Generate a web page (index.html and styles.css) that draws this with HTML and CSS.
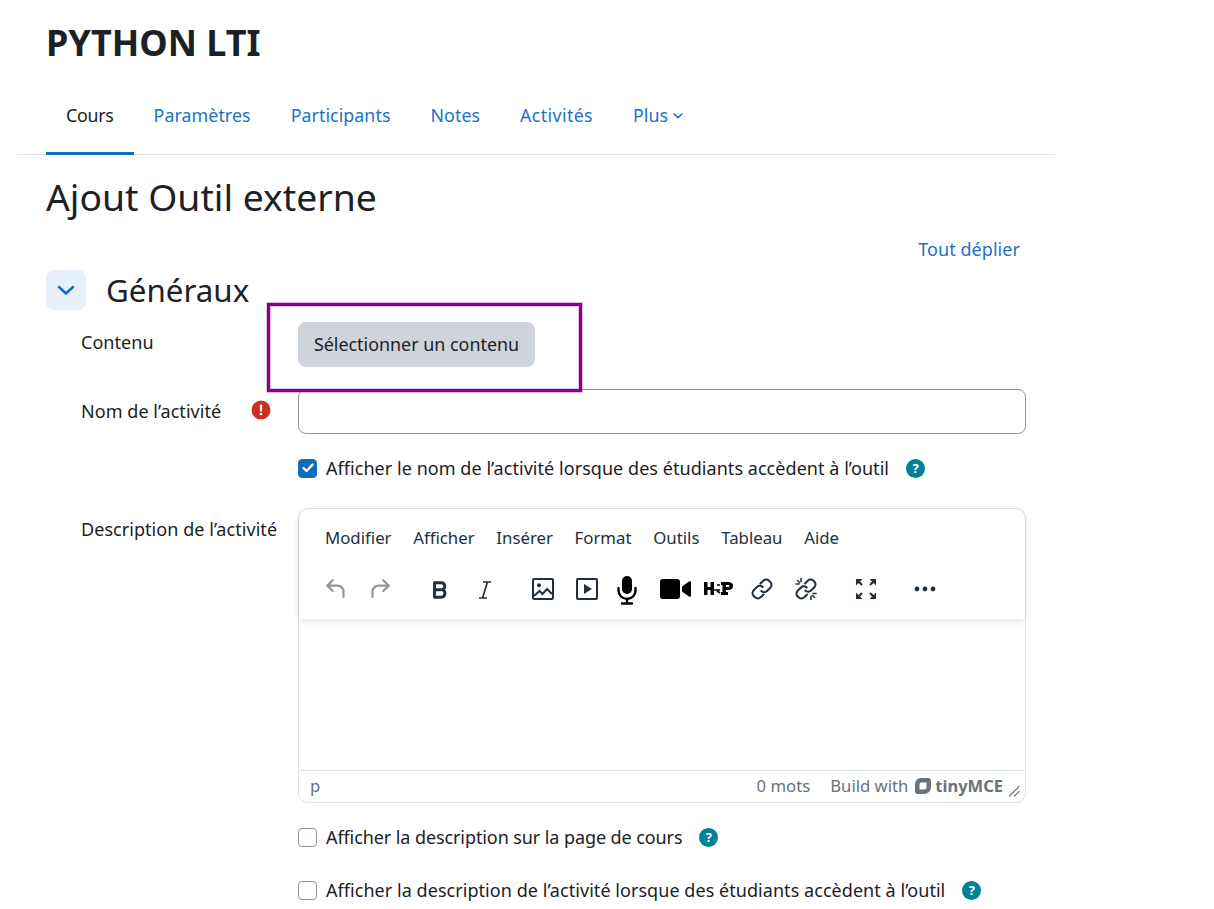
FILE: index.html
```html
<!DOCTYPE html>
<html lang="fr">
<head>
<meta charset="utf-8">
<title>Ajout Outil externe</title>
<link rel="stylesheet" href="styles.css">
</head>
<body>
<div class="page">
  <h1 class="course-title">PYTHON LTI</h1>
  <nav class="tabs">
    <a class="tab active">Cours</a>
    <a class="tab">Paramètres</a>
    <a class="tab">Participants</a>
    <a class="tab">Notes</a>
    <a class="tab tab-wide">Activités</a>
    <a class="tab">Plus <svg class="caret" width="10" height="6" viewBox="0 0 10 6"><path d="M1 1l4 3.6L9 1" fill="none" stroke="currentColor" stroke-width="1.5" stroke-linecap="round" stroke-linejoin="round"/></svg></a>
  </nav>
  <h2 class="page-title">Ajout Outil externe</h2>
  <div class="expand-row"><a class="expand">Tout déplier</a></div>
  <div class="section-head">
    <span class="toggle"><svg width="18" height="11" viewBox="0 0 18 11"><path d="M2 2l7 6.5L16 2" fill="none" stroke="#0f6cbf" stroke-width="2.4" stroke-linecap="round" stroke-linejoin="round"/></svg></span>
    <h3 class="section-title">Généraux</h3>
  </div>
  <div class="form">
    <div class="row row-content">
      <div class="label">Contenu</div>
      <div class="field"><button class="btn">Sélectionner un contenu</button><span class="highlight"></span></div>
    </div>
    <div class="row row-name">
      <div class="label label-req">Nom de l’activité
        <span class="req"><svg width="20" height="20" viewBox="0 0 20 20"><circle cx="10" cy="10" r="9.5" fill="#ca3120"/><rect x="8.9" y="4.6" width="2.2" height="6.8" rx="1" fill="#fff"/><circle cx="10" cy="14" r="1.3" fill="#fff"/></svg></span>
      </div>
      <div class="field"><input class="input" type="text"></div>
    </div>
    <div class="row row-check1">
      <div class="label"></div>
      <div class="field check">
        <span class="box on"><svg width="12" height="10" viewBox="0 0 12 10"><path d="M1.5 5l3 3 6-6.4" fill="none" stroke="#fff" stroke-width="2.4" stroke-linecap="round" stroke-linejoin="round"/></svg></span>
        <span>Afficher le nom de l’activité lorsque des étudiants accèdent à l’outil</span>
        <span class="help">?</span>
      </div>
    </div>
    <div class="row row-desc">
      <div class="label">Description de l’activité</div>
      <div class="field">
        <div class="editor">
          <div class="ed-head">
            <div class="menubar"><span>Modifier</span><span>Afficher</span><span>Insérer</span><span>Format</span><span>Outils</span><span>Tableau</span><span>Aide</span></div>
            <div class="toolbar">
              <svg class="ic i-undo" width="24" height="24" viewBox="0 0 24 24"><path d="M6.4 8.6h8.1a6 6 0 0 1 6 6V20" fill="none" stroke="#8f979e" stroke-width="2.2" stroke-linecap="round"/><path d="M9.8 3.2L4.2 8.6l5.600 5.400" fill="none" stroke="#8f979e" stroke-width="2.2" stroke-linecap="round" stroke-linejoin="round"/></svg>
              <svg class="ic i-redo" width="24" height="24" viewBox="0 0 24 24"><path d="M17.6 8.6H9.5a6 6 0 0 0-6 6V20" fill="none" stroke="#8f979e" stroke-width="2.2" stroke-linecap="round"/><path d="M14.2 3.2l5.600 5.400-5.600 5.400" fill="none" stroke="#8f979e" stroke-width="2.2" stroke-linecap="round" stroke-linejoin="round"/></svg>
              <svg class="ic i-bold" width="24" height="24" viewBox="0 0 24 24"><path d="M6.500 4.800h6.500a3.500 3.500 0 0 1 1 6.900 3.800 3.800 0 0 1-1 7.500H6.500zM6.500 11.800h6.500" fill="none" stroke="#222f3e" stroke-width="2.900" stroke-linejoin="round"/></svg>
              <svg class="ic i-italic" width="24" height="24" viewBox="0 0 24 24"><path d="M10 4h8M6 20h8M14.400 4l-4.800 16" fill="none" stroke="#222f3e" stroke-width="1.700"/></svg>
              <svg class="ic i-img" width="24" height="24" viewBox="0 0 24 24"><rect x="2" y="2" width="20" height="20" fill="none" stroke="#222f3e" stroke-width="2" rx="1"/><circle cx="8" cy="8.200" r="2" fill="#222f3e"/><path d="M3 19l5.500-5 3 3 4.500-5 5 5" fill="none" stroke="#222f3e" stroke-width="2"/></svg>
              <svg class="ic i-media" width="24" height="24" viewBox="0 0 24 24"><rect x="2" y="2" width="20" height="20" fill="none" stroke="#222f3e" stroke-width="2" rx="1"/><path d="M9 7l8 5-8 5z" fill="#222f3e"/></svg>
              <svg class="ic i-mic" width="24" height="30" viewBox="0 0 24 30"><rect x="7" y="1" width="10" height="18" rx="5" fill="#000"/><path d="M3.500 13v2.500a8.500 8.500 0 0 0 17 0V13" fill="none" stroke="#000" stroke-width="2.400" stroke-linecap="round"/><path d="M12 24v4M7 28.500h10" stroke="#000" stroke-width="2.400" stroke-linecap="round"/></svg>
              <svg class="ic i-video" width="32" height="20" viewBox="0 0 32 20"><rect x="0" y="0" width="20" height="20" rx="3" fill="#000"/><path d="M22 7.500l7-5q2-1 2 1v13q0 2-2 1l-7-5z" fill="#000"/></svg>
              <svg class="ic i-h5p" width="32" height="18" viewBox="0 0 32 18"><path d="M2 2v13h3.500v-5h3v5H12V2H8.500v5h-3V2zM19 2v3h1.500v7H19v3h7v-3h-2v-2h2q5 0 5-4t-5-4zm5 3h2q1.500 0 1.500 1T26 7h-2z" fill="#000"/><path d="M12 10h6m0-5h-3m3 8l-3-2" stroke="#000" stroke-width="1.600" fill="none"/></svg>
              <svg class="ic i-link" width="24" height="24" viewBox="0 0 24 24"><g fill="none" stroke="#222f3e" stroke-width="2" stroke-linecap="round"><path d="M10.500 6.500l2.800-2.800a4 4 0 0 1 5.700 0l1.300 1.300a4 4 0 0 1 0 5.700l-3.300 3.300a4 4 0 0 1-5.700 0"/><path d="M13.500 17.500l-2.800 2.800a4 4 0 0 1-5.700 0l-1.300-1.300a4 4 0 0 1 0-5.700l3.300-3.300a4 4 0 0 1 5.700 0"/></g></svg>
              <svg class="ic i-unlink" width="26" height="26" viewBox="0 0 26 26"><g fill="none" stroke="#222f3e" stroke-width="2" stroke-linecap="round"><path d="M12 7.500l2.800-2.800a4 4 0 0 1 5.700 0l.8.8a4 4 0 0 1 0 5.700l-3.300 3.300a4 4 0 0 1-5.700 0"/><path d="M14 18.500l-2.800 2.800a4 4 0 0 1-5.700 0l-.8-.8a4 4 0 0 1 0-5.700l3.300-3.300a4 4 0 0 1 5.700 0"/><path d="M3 8h3M8 2.500v3M18 20.500v3M20 17.500h3M4.500 4.500l2 2M19.500 19.500l2 2" stroke-width="1.600"/></g></svg>
              <svg class="ic i-full" width="22" height="22" viewBox="0 0 22 22"><g fill="none" stroke="#222f3e" stroke-width="2.200"><path d="M7 7L3 3"/><path d="M15 7l4-4"/><path d="M7 15l-4 4"/><path d="M15 15l4 4"/></g><g fill="#222f3e"><path d="M1 1h6.500L1 7.500zM21 1v6.500L14.500 1zM1 21v-6.500L7.500 21zM21 21h-6.500L21 14.500z"/></g></svg>
              <svg class="ic i-more" width="22" height="6" viewBox="0 0 22 6"><g fill="#222f3e"><circle cx="3" cy="3" r="2.400"/><circle cx="11" cy="3" r="2.400"/><circle cx="19" cy="3" r="2.400"/></g></svg>
            </div>
          </div>
          <div class="ed-body"></div>
          <div class="statusbar">
            <span class="path">p</span>
            <span class="words">0 mots</span>
            <span class="brand"><span>Build with</span><svg width="18" height="18" viewBox="0 0 18 18"><path fill-rule="evenodd" d="M6 1h8a3 3 0 0 1 3 3v6a7 7 0 0 1-7 7H4a3 3 0 0 1-3-3V8a7 7 0 0 1 5-7zM7 5.500a2 2 0 0 0-1.500 2v5h5a2 2 0 0 0 2-2v-5z" fill="#68727c"/></svg><b>tinyMCE</b></span>
            <svg class="grip" width="12" height="12" viewBox="0 0 12 12"><path d="M1.500 11L11 1.500M6.500 11L11 6.500" stroke="#68727c" stroke-width="1.200" stroke-linecap="round"/></svg>
          </div>
        </div>
      </div>
    </div>
    <div class="row row-check2">
      <div class="label"></div>
      <div class="field check">
        <span class="box"></span>
        <span class="tight">Afficher la description sur la page de cours</span>
        <span class="help">?</span>
      </div>
    </div>
    <div class="row row-check3">
      <div class="label"></div>
      <div class="field check">
        <span class="box"></span>
        <span>Afficher la description de l’activité lorsque des étudiants accèdent à l’outil</span>
        <span class="help">?</span>
      </div>
    </div>
  </div>
</div>
</body>
</html>
```
FILE: styles.css
```css
* { box-sizing: border-box; }
html, body { margin: 0; padding: 0; background: #fff; }
body {
  font-family: "Noto Sans", "Open Sans", sans-serif;
  font-size: 18px;
  letter-spacing: .05px;
  line-height: 24px;
  color: #1d2125;
  height: 909px;
  overflow: hidden;
}
.page { width: 1055px; padding-left: 46px; padding-top: 21px; position: relative; }
.course-title { margin: 0; font-size: 36px; line-height: 44px; font-weight: 700; color: #1d2125; letter-spacing: 0; }
.tabs {
  display: flex;
  margin: 28px 0 0 -29px;
  padding-left: 29px;
  height: 62px;
  border-bottom: 1px solid #dee2e6;
}
.tab {
  padding: 0 20px 15px;
  height: 62px;
  display: flex;
  align-items: center;
  gap: 5px;
  color: #1a73c9;
  font-size: 17.800px;
  letter-spacing: .07px;
  border-bottom: 3px solid transparent;
  white-space: nowrap;
}
.tab.active { color: #1d2125; border-bottom-color: #0f6cbf; letter-spacing: -.25px; }
.tab-wide { letter-spacing: .38px; }
.caret { margin-top: 1px; }
.page-title { margin: 20px 0 0; font-size: 37.300px; line-height: 44px; font-weight: 400; color: #1d2125; letter-spacing: 0; }
.expand-row { display: flex; justify-content: flex-end; margin-top: 18px; padding-right: 35px; height: 24px; }
.expand { color: #1a73c9; }
.section-head { display: flex; align-items: center; margin-top: 9px; height: 40px; gap: 20px; }
.toggle { width: 40px; height: 40px; border-radius: 8px; background: #e7effa; display: flex; align-items: center; justify-content: center; }
.section-title { margin: 0; font-size: 31.300px; line-height: 40px; font-weight: 400; letter-spacing: 0; }
.form { padding-left: 35px; width: 980px; }
.row { display: flex; }
.label { width: 217px; flex: none; display: flex; position: relative; }
.field { width: 728px; position: relative; }
.row-content { margin-top: 12px; height: 67px; }
.row-content .label { padding-top: 8px; }
.btn {
  width: 237px; height: 45px; border: 0; border-radius: 8px; background: #ced4da;
  font: inherit; font-size: 17.900px; letter-spacing: 0; color: #1d2125; padding: 0 0 1px; display: block;
}
.highlight {
  position: absolute; z-index: 1; left: -31px; top: -19px; width: 315px; height: 89px;
  border: 3px solid #8b008b; pointer-events: none;
  box-shadow: 0 0 0 1px rgba(139,0,139,.25), inset 0 0 0 1px rgba(139,0,139,.25);
}
.row-name { height: 45px; }
.row-name .label { padding-top: 10px; }
.req { position: absolute; left: 170px; top: 11px; width: 20px; height: 20px; }
.req svg { display: block; }
.input { width: 728px; height: 45px; border: 1px solid #8f959e; border-radius: 8px; display: block; background: #fff; }
.check { display: flex; align-items: center; height: 24px; }
.box { width: 19px; height: 19px; border: 1px solid #8f959e; border-radius: 4px; margin-right: 9px; flex: none; background: #fff; display: flex; align-items: center; justify-content: center; }
.box.on { background: #0f6cbf; border-color: #0f6cbf; }
.tight { letter-spacing: -.09px; }
.help {
  width: 19px; height: 19px; border-radius: 50%; background: #008196; color: #fff;
  font-size: 13px; font-weight: 700; line-height: 19px; text-align: center; margin-left: 17px; flex: none;
}
.row-check1 { margin-top: 22px; }
.row-desc { margin-top: 28px; }
.row-desc .label { padding-top: 9px; }
.editor { width: 728px; height: 295px; border: 1px solid #dee2e6; border-radius: 10px; display: flex; flex-direction: column; position: relative; background: #fff; }
.ed-head { height: 110px; flex: none; box-shadow: 0 2px 6px rgba(34,47,62,.14); border-radius: 10px 10px 0 0; position: relative; background: #fff; padding-left: 26px; }
.menubar { display: flex; gap: 21.700px; padding-top: 17px; font-size: 16.800px; letter-spacing: 0; line-height: 24px; color: #222f3e; }
.toolbar { position: relative; height: 60px; margin: 18px 0 0 -26px; }
.ic { position: absolute; display: block; }
.i-undo { left: 24px; top: 9px; }
.i-redo { left: 70px; top: 9px; }
.i-bold { left: 129px; top: 10px; }
.i-italic { left: 174px; top: 10px; }
.i-img { left: 232px; top: 9px; }
.i-media { left: 276px; top: 9px; }
.i-mic { left: 316px; top: 7px; }
.i-video { left: 361px; top: 11px; }
.i-h5p { left: 403px; top: 12px; }
.i-link { left: 451px; top: 9px; }
.i-unlink { left: 494px; top: 8px; }
.i-full { left: 556px; top: 10px; }
.i-more { left: 615px; top: 18px; }
.ed-body { flex: 1; }
.statusbar { height: 32px; border-top: 1px solid #dee2e6; display: flex; align-items: center; font-size: 16.700px; letter-spacing: 0; color: #68727c; padding: 0 5px 2px 11px; }
.path { flex: 1; }
.words { margin-right: 20px; }
.brand { display: flex; align-items: center; gap: 6px; white-space: nowrap; }
.brand b { font-weight: 700; margin-left: -3px; font-size: 16.500px; }
.grip { margin-left: 5px; margin-top: 11px; }
.row-check2 { margin-top: 22px; }
.row-check3 { margin-top: 29px; }
```
